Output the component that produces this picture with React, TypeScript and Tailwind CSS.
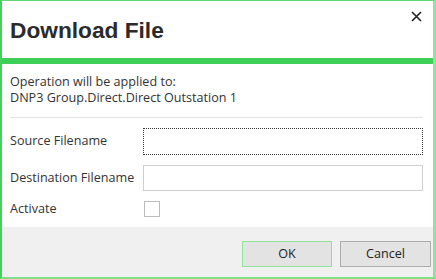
import React from "react";

export default function App() {
  return (
    <div className="w-[436px] h-[279px] bg-white border-l-2 border-t border-b-2 border-r-[3px] border-l-[#46cf5c] border-t-[#5fd872] border-b-[#7ddf8c] border-r-[#8fe3a0] flex flex-col overflow-hidden" style={{ fontFamily: '"Segoe UI", "Open Sans", sans-serif' }}>
      <div className="relative h-[57px] flex items-center pl-[8px]">
        <h1 className="text-[22.7px] font-bold text-[#2b2b2b] mt-[2px]" style={{ fontFamily: '"Liberation Sans", Arial, sans-serif' }}>Download File</h1>
        <button className="absolute right-[10px] top-[8px] w-[14px] h-[14px] flex items-center justify-center">
          <svg width="11" height="11" viewBox="0 0 11 11">
            <path d="M1 1L10 10M10 1L1 10" stroke="#222" strokeWidth="1.6" />
          </svg>
        </button>
      </div>
      <div className="h-[6px] bg-[#3ecf58]" />
      <div className="px-[8px] pt-[10px] text-[12.6px] leading-[16px] text-[#333]">
        <p>Operation will be applied to:</p>
        <p>DNP3 Group.Direct.Direct Outstation 1</p>
        <div className="h-px bg-[#e2e2e2] mt-[11px] mr-[2px]" />
      </div>
      <div className="px-[8px] pt-[10px] text-[12.6px] text-[#333] flex flex-col gap-[10px]">
        <div className="flex items-center">
          <span className="w-[133px]">Source Filename</span>
          <div className="flex-1 h-[27px] mr-[2px] border border-dotted border-[#333] bg-white" />
        </div>
        <div className="flex items-center">
          <span className="w-[133px]">Destination Filename</span>
          <div className="flex-1 h-[26px] mr-[2px] border border-[#cfcfcf] bg-white" />
        </div>
        <div className="flex items-center h-[16px]">
          <span className="w-[134px]">Activate</span>
          <div className="w-[16px] h-[16px] border border-[#bdbdbd] bg-white" />
        </div>
      </div>
      <div className="flex-1 mt-[10px] bg-[#f0f0f0] flex items-start justify-end gap-[8px] pt-[14px] pr-[2px]">
        <button className="w-[90px] h-[26px] bg-[#e3e3e3] border border-[#8ee49a] text-[12.6px] text-[#222]">OK</button>
        <button className="w-[91px] h-[26px] bg-[#e3e3e3] border border-[#adadad] text-[12.6px] text-[#222]">Cancel</button>
      </div>
    </div>
  );
}
